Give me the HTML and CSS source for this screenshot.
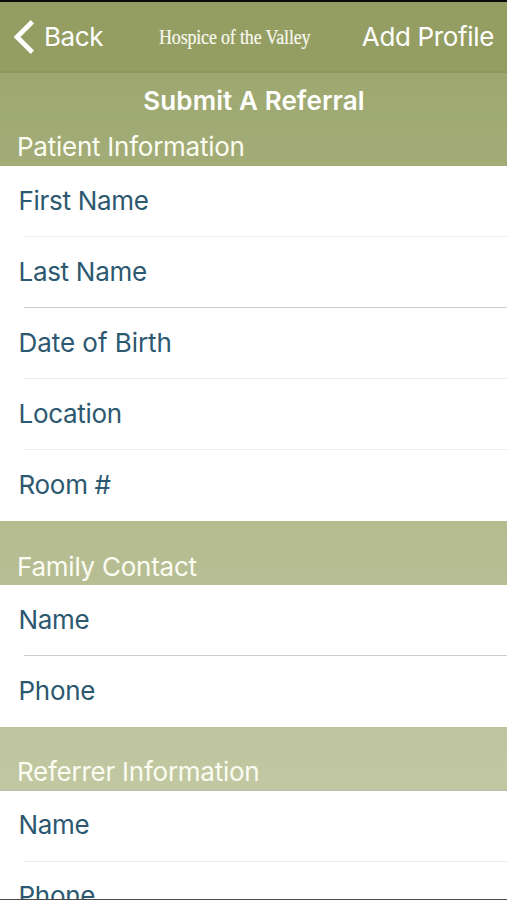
FILE: index.html
```html
<!DOCTYPE html>
<html lang="en">
<head>
<meta charset="utf-8">
<title>Submit A Referral</title>
<link rel="stylesheet" href="styles.css">
</head>
<body>
<div class="screen">
  <header class="navbar">
    <div class="back">
      <svg class="chevron" width="22" height="34" viewBox="0 0 22 34" fill="none" stroke="#fff" stroke-width="4.8"><path d="M20.400 1.8 5 17l15.400 15.200"/></svg>
      <span class="back-label">Back</span>
    </div>
    <div class="brand">Hospice of the Valley</div>
    <div class="action">Add Profile</div>
  </header>
  <main class="form">
    <h1 class="title">Submit A Referral</h1>
    <h2 class="section first">Patient Information</h2>
    <ul class="rows">
      <li class="row"><span>First Name</span></li>
      <li class="row strong"><span>Last Name</span></li>
      <li class="row wide"><span>Date of Birth</span></li>
      <li class="row"><span>Location</span></li>
      <li class="row"><span>Room #</span></li>
    </ul>
    <h2 class="section">Family Contact</h2>
    <ul class="rows">
      <li class="row strong"><span>Name</span></li>
      <li class="row"><span>Phone</span></li>
    </ul>
    <h2 class="section ruled">Referrer Information</h2>
    <ul class="rows">
      <li class="row"><span>Name</span></li>
      <li class="row"><span>Phone</span></li>
    </ul>
  </main>
</div>
</body>
</html>
```

FILE: styles.css
```css
* { box-sizing: border-box; margin: 0; padding: 0; }
body { font-family: Inter, "Liberation Sans", sans-serif; font-size: 26px; }
.screen {
  height: 900px;
  overflow: hidden;
  border-top: 2px solid #0b0c06;
  border-bottom: 1px solid #4a4a4a;
  background: linear-gradient(#9da86f 70px, #a3ac77 165px, #b5bc90 530px, #c1c7a1 780px);
}
.navbar {
  height: 71px;
  display: grid;
  grid-template-columns: 145px 1fr 159px;
  align-items: center;
  background: #949e62;
  border-bottom: 2px solid #8f995f;
  color: #fff;
  line-height: 32px;
}
.back { display: flex; align-items: center; gap: 10px; padding-left: 12px; }
.chevron { display: block; }
.back-label { letter-spacing: -0.4px; }
.brand {
  font-family: "Liberation Serif", serif;
  font-size: 20px;
  letter-spacing: -0.2px;
  padding-left: 14px;
  white-space: nowrap;
  color: #f8f9ee;
  -webkit-text-stroke: 0.2px #f8f9ee;
  transform: scaleX(0.9);
  transform-origin: 14px 50%;
}
.action { text-align: right; padding-right: 13px; letter-spacing: -0.35px; white-space: nowrap; }
.title {
  height: 54px;
  line-height: 55px;
  text-align: center;
  padding-left: 1px;
  font-size: 26px;
  font-weight: 600;
  letter-spacing: 0.1px;
  color: #fff;
}
.section {
  height: 64px;
  padding: 29px 0 0 17px;
  line-height: 34px;
  font-size: 26px;
  font-weight: 400;
  letter-spacing: -0.25px;
  color: #fbfcf2;
}
.section.first { height: 39px; padding-top: 3px; }
.section.ruled { border-bottom: 1px solid #b9bba9; }
.rows { list-style: none; background: #fff; }
.row {
  height: 71px;
  padding-left: 18.5px;
  line-height: 69px;
  letter-spacing: -0.3px;
  color: #2c5870;
  background: linear-gradient(#ebebeb, #ebebeb) 24px 100% / 100% 1px no-repeat;
}
.row.strong { background-image: linear-gradient(#cbcccd, #cbcccd); }
.row.wide { letter-spacing: -0.05px; }
.row:last-child { background: none; }
.section.ruled { padding-top: 28px; }
.section.ruled + .rows .row { line-height: 68px; }
```
